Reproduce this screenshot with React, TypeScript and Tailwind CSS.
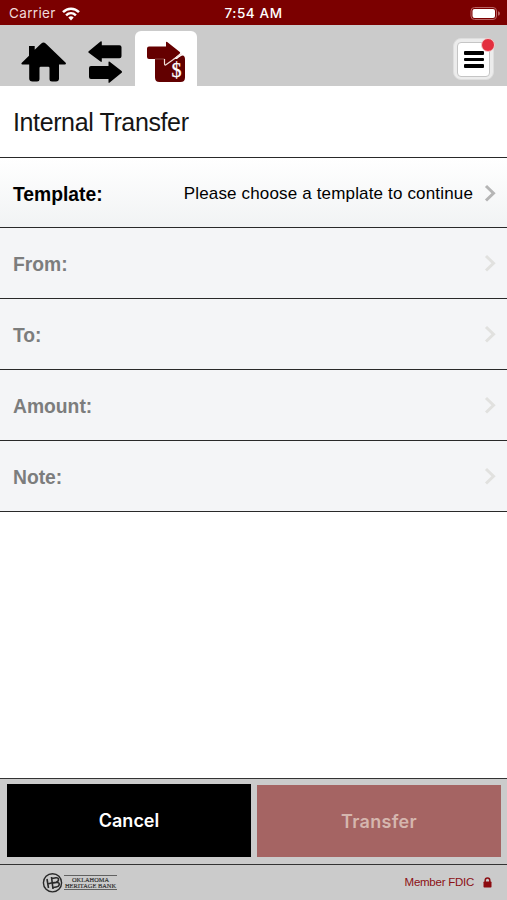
import React from 'react';

function WifiIcon() {
  return (
    <svg className="ml-[6px] h-[14px] w-[18px]" viewBox="0 0 18 14" fill="none" stroke="#fff" strokeWidth="2.5">
      <path d="M1 5.1C5.5 .5 12.5 .5 17 5.1" />
      <path d="M4.1 8.4C7 5.6 11 5.6 13.9 8.4" />
      <path d="M6.3 10.5Q9 8.2 11.7 10.5L9 13.4Z" fill="#fff" stroke="none" />
    </svg>
  );
}

function BatteryIcon() {
  return (
    <svg className="h-[15px] w-[31px]" viewBox="0 0 31 15">
      <rect x="1" y="1.500" width="25.500" height="12" rx="3.5" fill="none" stroke="#b96464" />
      <rect x="2.500" y="3" width="22.500" height="9" rx="2" fill="#fff" />
      <path d="M28 5.2q2 .6 2 2.3t-2 2.3z" fill="#b96464" />
    </svg>
  );
}

function HomeIcon() {
  return (
    <svg className="h-[40px] w-[46px]" viewBox="0 0 46 40">
      <path
        d="M8 4h5.700v3.700L20.300 1.500q2.200-2 4.400 0L44.700 20.800q.8 1.700-1 1.700H38v14q0 3-3 3h-4q-2.500 0-2.500-2.500V26q0-1.200-1.200-1.200h-7.600q-1.200 0-1.200 1.200v11q0 2.500-2.500 2.500h-4.500q-3.300 0-3.300-3V22.500H1.500q-1.800 0-.7-1.700L8 13.700z"
        fill="#000"
      />
    </svg>
  );
}

function SwapIcon() {
  return (
    <svg className="h-[42px] w-[35px]" viewBox="0 0 35 42" fill="#000">
      <path d="M.7 10.200L12.500.6q1.300-.9 1.300.7V4.300H31.500q2 0 2 2V15.300q0 2-2 2H13.800V20q0 1.500-1.300.6L.7 11.700q-.9-.7 0-1.500z" />
      <path d="M33.600 30.100L21.700 20.700q-1.200-.9-1.200.7V25H3Q1 25 1 27v9q0 2 2 2H20.500v3q0 1.500 1.200.6l11.900-9.900q.8-.8 0-1.600z" />
    </svg>
  );
}

function TransferIcon() {
  return (
    <svg className="h-[42px] w-[39px]" viewBox="0 0 39 42">
      <path d="M8 18h22q7.500-7.200 8 0v18.500q0 4.500-4.500 4.500H12.500Q8 41 8 36.500z" fill="#620000" />
      <path
        d="M2 5.500H19V1.500q0-1.300 1.200-.5L32.800 11q.8.800 0 1.500L20.200 23.200Q18.500 24 18.500 22V18H2q-2 0-2-2V7.500q0-2 2-2z"
        fill="#650000"
      />
      <path d="M8 18H17.500" stroke="#9a5f5a" strokeWidth=".7" />
      <path d="M17.500 18v4.500q0 2.500 1.800 1L34.500 12.800" fill="none" stroke="#f0dcd6" strokeWidth="1.200" />
      <text
        x="29.500"
        y="35.500"
        textAnchor="middle"
        fill="#fff"
        stroke="#fff"
        strokeWidth=".3"
        className="font-['Liberation_Serif',serif] text-[20px]"
      >
        $
      </text>
    </svg>
  );
}

function Chevron({ muted }: { muted?: boolean }) {
  return (
    <svg className="ml-[11px] h-[19px] w-[13px]" viewBox="0 0 13 19" fill="none">
      <path d="M2 2L9.500 9.200L2 16.500" stroke={muted ? '#e1e1df' : '#b5b5b5'} strokeWidth="3" />
    </svg>
  );
}

function FormRow({ label, value }: { label: string; value?: string }) {
  return (
    <div
      className={
        value
          ? 'flex h-[70px] items-center border-b border-[#292929] bg-linear-to-b from-white to-[#f1f3f4] pt-[1px] pr-[10px] pl-[13px] text-black'
          : 'flex h-[71px] items-center border-b border-[#292929] bg-[#f4f5f7] pt-[1px] pr-[10px] pl-[13px] text-[#7c7d7d]'
      }
    >
      <span className="flex-1 pt-[3px] text-[19.300px] leading-6 font-bold">{label}</span>
      {value && <span className="pt-[2px] text-[17px] leading-6 tracking-[0.160px]">{value}</span>}
      <Chevron muted={!value} />
    </div>
  );
}

function BankLogo() {
  return (
    <svg className="h-[22px] w-[76px] overflow-visible" viewBox="0 0 76 22" fill="#292929">
      <circle cx="10.500" cy="10.800" r="9.100" fill="none" stroke="#292929" strokeWidth="1.400" />
      <path
        d="M5 7l1.500 9M9.500 5l1.500 12M5.800 12l5-1.500M10 6.500l4-.8q2.500-.2 2.500 1.800t-2.500 2.700l-3 .7M11.500 11l3-.5q3-.2 2.700 2t-3 2.500l-3 .5"
        fill="none"
        stroke="#292929"
        strokeWidth="1.600"
      />
      <path d="M22 3.500H75M22 17.500H75" stroke="#454545" strokeWidth=".8" />
      <text
        x="48.500"
        y="9.900"
        textAnchor="middle"
        textLength="37"
        lengthAdjust="spacingAndGlyphs"
        stroke="#292929"
        strokeWidth=".15"
        className="font-['Liberation_Serif',serif] text-[7px]"
      >
        OKLAHOMA
      </text>
      <text
        x="48.500"
        y="16.200"
        textAnchor="middle"
        textLength="51"
        lengthAdjust="spacingAndGlyphs"
        stroke="#292929"
        strokeWidth=".15"
        className="font-['Liberation_Serif',serif] text-[7px]"
      >
        HERITAGE BANK
      </text>
    </svg>
  );
}

function LockIcon() {
  return (
    <svg className="ml-[9px] h-[11px] w-[9px]" viewBox="0 0 9 11">
      <path d="M2.200 5V3.300a2.300 2.300 0 0 1 4.600 0V5" fill="none" stroke="#8c1014" strokeWidth="1.500" />
      <rect x=".5" y="4.500" width="8" height="6" rx=".8" fill="#8c0b10" />
    </svg>
  );
}

export default function App() {
  return (
    <div className="flex h-[900px] w-[507px] flex-col overflow-hidden bg-white font-['Liberation_Sans',Arial,sans-serif]">
      <header className="grid h-[25px] shrink-0 grid-cols-3 items-center bg-[#7b0000] pt-[2px] font-['Inter',sans-serif] text-[13.500px] text-white">
        <div className="flex items-center pl-[9px]">
          <span className="tracking-[0.350px] text-[#f0dada]">Carrier</span>
          <WifiIcon />
        </div>
        <span className="text-center text-[13.500px] font-medium tracking-[0.600px]">7:54 AM</span>
        <div className="flex justify-end pr-[6px]">
          <BatteryIcon />
        </div>
      </header>

      <nav className="flex h-[61px] shrink-0 bg-[#cbcbcb]">
        <div className="pt-[17px] pl-[21px]">
          <HomeIcon />
        </div>
        <div className="ml-[21px] pt-[16px]">
          <SwapIcon />
        </div>
        <div className="mt-[6px] ml-[12px] w-[62px] rounded-t-[6px] bg-white pt-[10px] pl-[12px]">
          <TransferIcon />
        </div>
        <button
          type="button"
          aria-label="Menu"
          className="relative mt-[13px] mr-[13px] ml-auto flex h-[42px] w-[41px] items-center justify-center rounded-[8px] border border-[#dedede] bg-[#ececec]"
        >
          <span className="flex h-[35px] w-[33px] flex-col items-center justify-center gap-[3px] rounded-[4px] border border-[#c5c5c5] bg-white pt-[1px]">
            <span className="h-[3.500px] w-[20px] rounded-[1px] bg-black" />
            <span className="h-[3.500px] w-[20px] rounded-[1px] bg-black" />
            <span className="h-[3.500px] w-[20px] rounded-[1px] bg-black" />
          </span>
          <span className="absolute -top-[1px] -right-[2px] h-[14px] w-[14px] rounded-full border border-[#f3cccc] bg-[#e32e3e]" />
        </button>
      </nav>

      <h1 className="flex h-[72px] shrink-0 items-center border-b border-[#292929] pt-[2px] pl-[13px] text-[25px] tracking-[-0.380px] text-[#151515]">
        Internal Transfer
      </h1>

      <main className="flex-1">
        <FormRow label="Template:" value="Please choose a template to continue" />
        <FormRow label="From:" />
        <FormRow label="To:" />
        <FormRow label="Amount:" />
        <FormRow label="Note:" />
      </main>

      <section className="flex h-[86px] shrink-0 gap-[6px] border-t border-[#333] bg-[#cbcbcb] pr-[6px] pl-[7px] pt-[5px] pb-[7px] font-['Inter',sans-serif] text-[18px] font-semibold">
        <button type="button" className="w-[244px] bg-black text-white">
          Cancel
        </button>
        <button type="button" disabled className="mt-[1px] w-[244px] bg-[#a56463] tracking-[0.300px] text-[#d5b6ae]">
          Transfer
        </button>
      </section>

      <footer className="flex h-[36px] shrink-0 items-center border-t border-[#333] bg-[#cbcbcb] pr-[15px] pl-[42px]">
        <BankLogo />
        <span className="ml-auto text-[11.500px] tracking-[-0.250px] text-[#8c1014]">Member FDIC</span>
        <LockIcon />
      </footer>
    </div>
  );
}
